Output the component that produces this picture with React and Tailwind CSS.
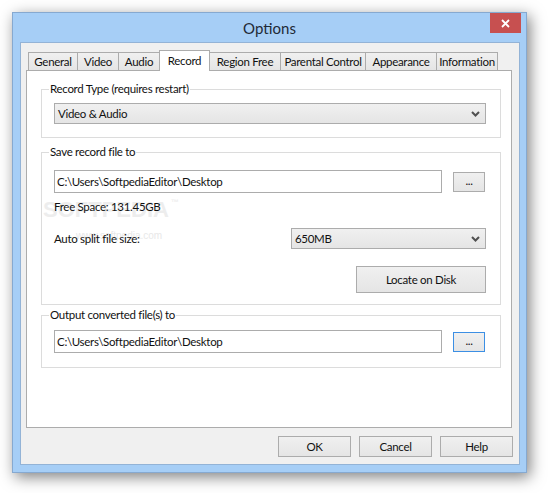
import React from "react";

const font = { fontFamily: '"Segoe UI", Lato, "Liberation Sans", sans-serif' };
const txt = "text-[11.5px] tracking-[-0.3px] text-[#111] whitespace-nowrap";

function Chevron() {
  return (
    <svg width="9" height="6" viewBox="0 0 9 6" className="shrink-0">
      <polyline points="1,1 4.5,4.5 8,1" fill="none" stroke="#505050" strokeWidth="2" />
    </svg>
  );
}

function Select({ value, className }) {
  return (
    <div className={"flex items-center justify-between h-[21px] border border-[#acacac] bg-gradient-to-b from-[#f0f0f0] to-[#e5e5e5] pl-[3px] pr-[5px] " + className}>
      <span className={txt + " leading-none"}>{value}</span>
      <Chevron />
    </div>
  );
}

function Btn({ children, className, focused }) {
  return (
    <div className={"flex items-center justify-center border bg-gradient-to-b from-[#f0f0f0] to-[#e5e5e5] " + txt + " " + (focused ? "border-[#3c8fe4] " : "border-[#acacac] ") + className}>
      {children}
    </div>
  );
}

function Input({ value }) {
  return (
    <div className={"flex items-center h-[23px] w-[388px] border border-[#acacac] bg-white pl-[2px] " + txt}>
      {value}
    </div>
  );
}

function Group({ label, className, children }) {
  return (
    <div className={"relative isolate ml-[14px] w-[460px] border border-[#dcdcdc] " + className}>
      <span className={"absolute -top-[9px] left-[7px] bg-white px-[1px] leading-[16px] " + txt}>{label}</span>
      {children}
    </div>
  );
}

const tabs = [
  ["General", "w-[50px]"],
  ["Video", "w-[42px]"],
  ["Audio", "w-[42px]"],
  ["Record", "w-[51px]"],
  ["Region Free", "w-[72px]"],
  ["Parental Control", "w-[86px]"],
  ["Appearance", "w-[72px]"],
  ["Information", "w-[62px]"],
];

export default function App() {
  return (
    <div className="w-[548px] h-[493px] bg-white pt-[12px] pl-[12px]" style={font}>
      <div className="w-[515px] h-[461px] flex flex-col bg-[#a6cef6] border border-[#86a9d0] shadow-[3px_4px_14px_rgba(0,0,0,0.5)]">
        <div className="relative h-[29px] flex items-center justify-center">
          <span className="text-[15px] text-[#1f2a36] pt-[2px]">Options</span>
          <div className="absolute top-0 right-[5px] w-[31px] h-[20px] bg-[#c75050] flex items-center justify-center">
            <svg width="9" height="9" viewBox="0 0 9 9">
              <path d="M1 1 L8 8 M8 1 L1 8" stroke="white" strokeWidth="1.8" />
            </svg>
          </div>
        </div>
        <div className="flex-1 ml-[7px] mr-[6px] mb-[7px] bg-[#f0f0f0] border border-[#93b3d6] flex flex-col">
          <div className="flex items-end h-[19px] mt-[8px] ml-[7px]">
            {tabs.map(([t, w]) =>
              t === "Record" ? (
                <div key={t} className={"relative z-10 h-[21px] -mb-[1px] -ml-px bg-white border border-b-0 border-[#acacac] flex items-start justify-center pt-[1px] " + txt + " " + w}>
                  {t}
                </div>
              ) : (
                <div key={t} className={"h-[18px] -ml-px first:ml-0 bg-gradient-to-b from-[#f0f0f0] to-[#e5e5e5] border border-b-0 border-[#acacac] flex items-center justify-center " + txt + " " + w}>
                  {t}
                </div>
              )
            )}
          </div>
          <div className="ml-[5px] w-[486px] h-[358px] bg-white border border-[#acacac] flex flex-col">
            <Group label="Record Type (requires restart)" className="mt-[18px] pt-[13px] pb-[13px] pl-[12px]">
              <Select value="Video & Audio" className="w-[432px]" />
            </Group>
            <Group label="Save record file to" className="mt-[14px] pt-[17px] pl-[12px] pb-[11px]">
              <div className="absolute -z-10 left-[1px] top-[46px] pointer-events-none select-none" style={{ fontFamily: '"Liberation Sans", sans-serif' }}>
                <div className="text-[22px] font-bold leading-none text-[#ededed]">
                  SOFTPEDIA<span className="text-[8px] align-top ml-[2px]">™</span>
                </div>
                <div className="ml-[33px] mt-[10px] text-[10px] leading-none text-[#e8e8e8]">www.softpedia.com</div>
              </div>
              <div className="flex items-center gap-[11px]">
                <Input value="C:\Users\SoftpediaEditor\Desktop" />
                <Btn className="w-[32px] h-[20px] pb-[2px]">...</Btn>
              </div>
              <div className={"mt-[6px] h-[16px] leading-[16px] " + txt}>Free Space: 131.45GB</div>
              <div className="mt-[13px] flex items-center justify-between w-[432px]">
                <span className={txt}>Auto split file size:</span>
                <Select value="650MB" className="w-[195px]" />
              </div>
              <div className="mt-[17px] flex justify-end w-[432px]">
                <Btn className="w-[130px] h-[27px]">Locate on Disk</Btn>
              </div>
            </Group>
            <Group label="Output converted file(s) to" className="mt-[10px] pt-[14px] pl-[12px] pb-[14px]">
              <div className="flex items-center gap-[11px]">
                <Input value="C:\Users\SoftpediaEditor\Desktop" />
                <Btn focused className="w-[32px] h-[20px] pb-[2px]">...</Btn>
              </div>
            </Group>
          </div>
          <div className="flex justify-end gap-[8px] mt-[8px] mr-[6px]">
            <Btn className="w-[73px] h-[21px]">OK</Btn>
            <Btn className="w-[73px] h-[21px]">Cancel</Btn>
            <Btn className="w-[73px] h-[21px]">Help</Btn>
          </div>
        </div>
      </div>
    </div>
  );
}
